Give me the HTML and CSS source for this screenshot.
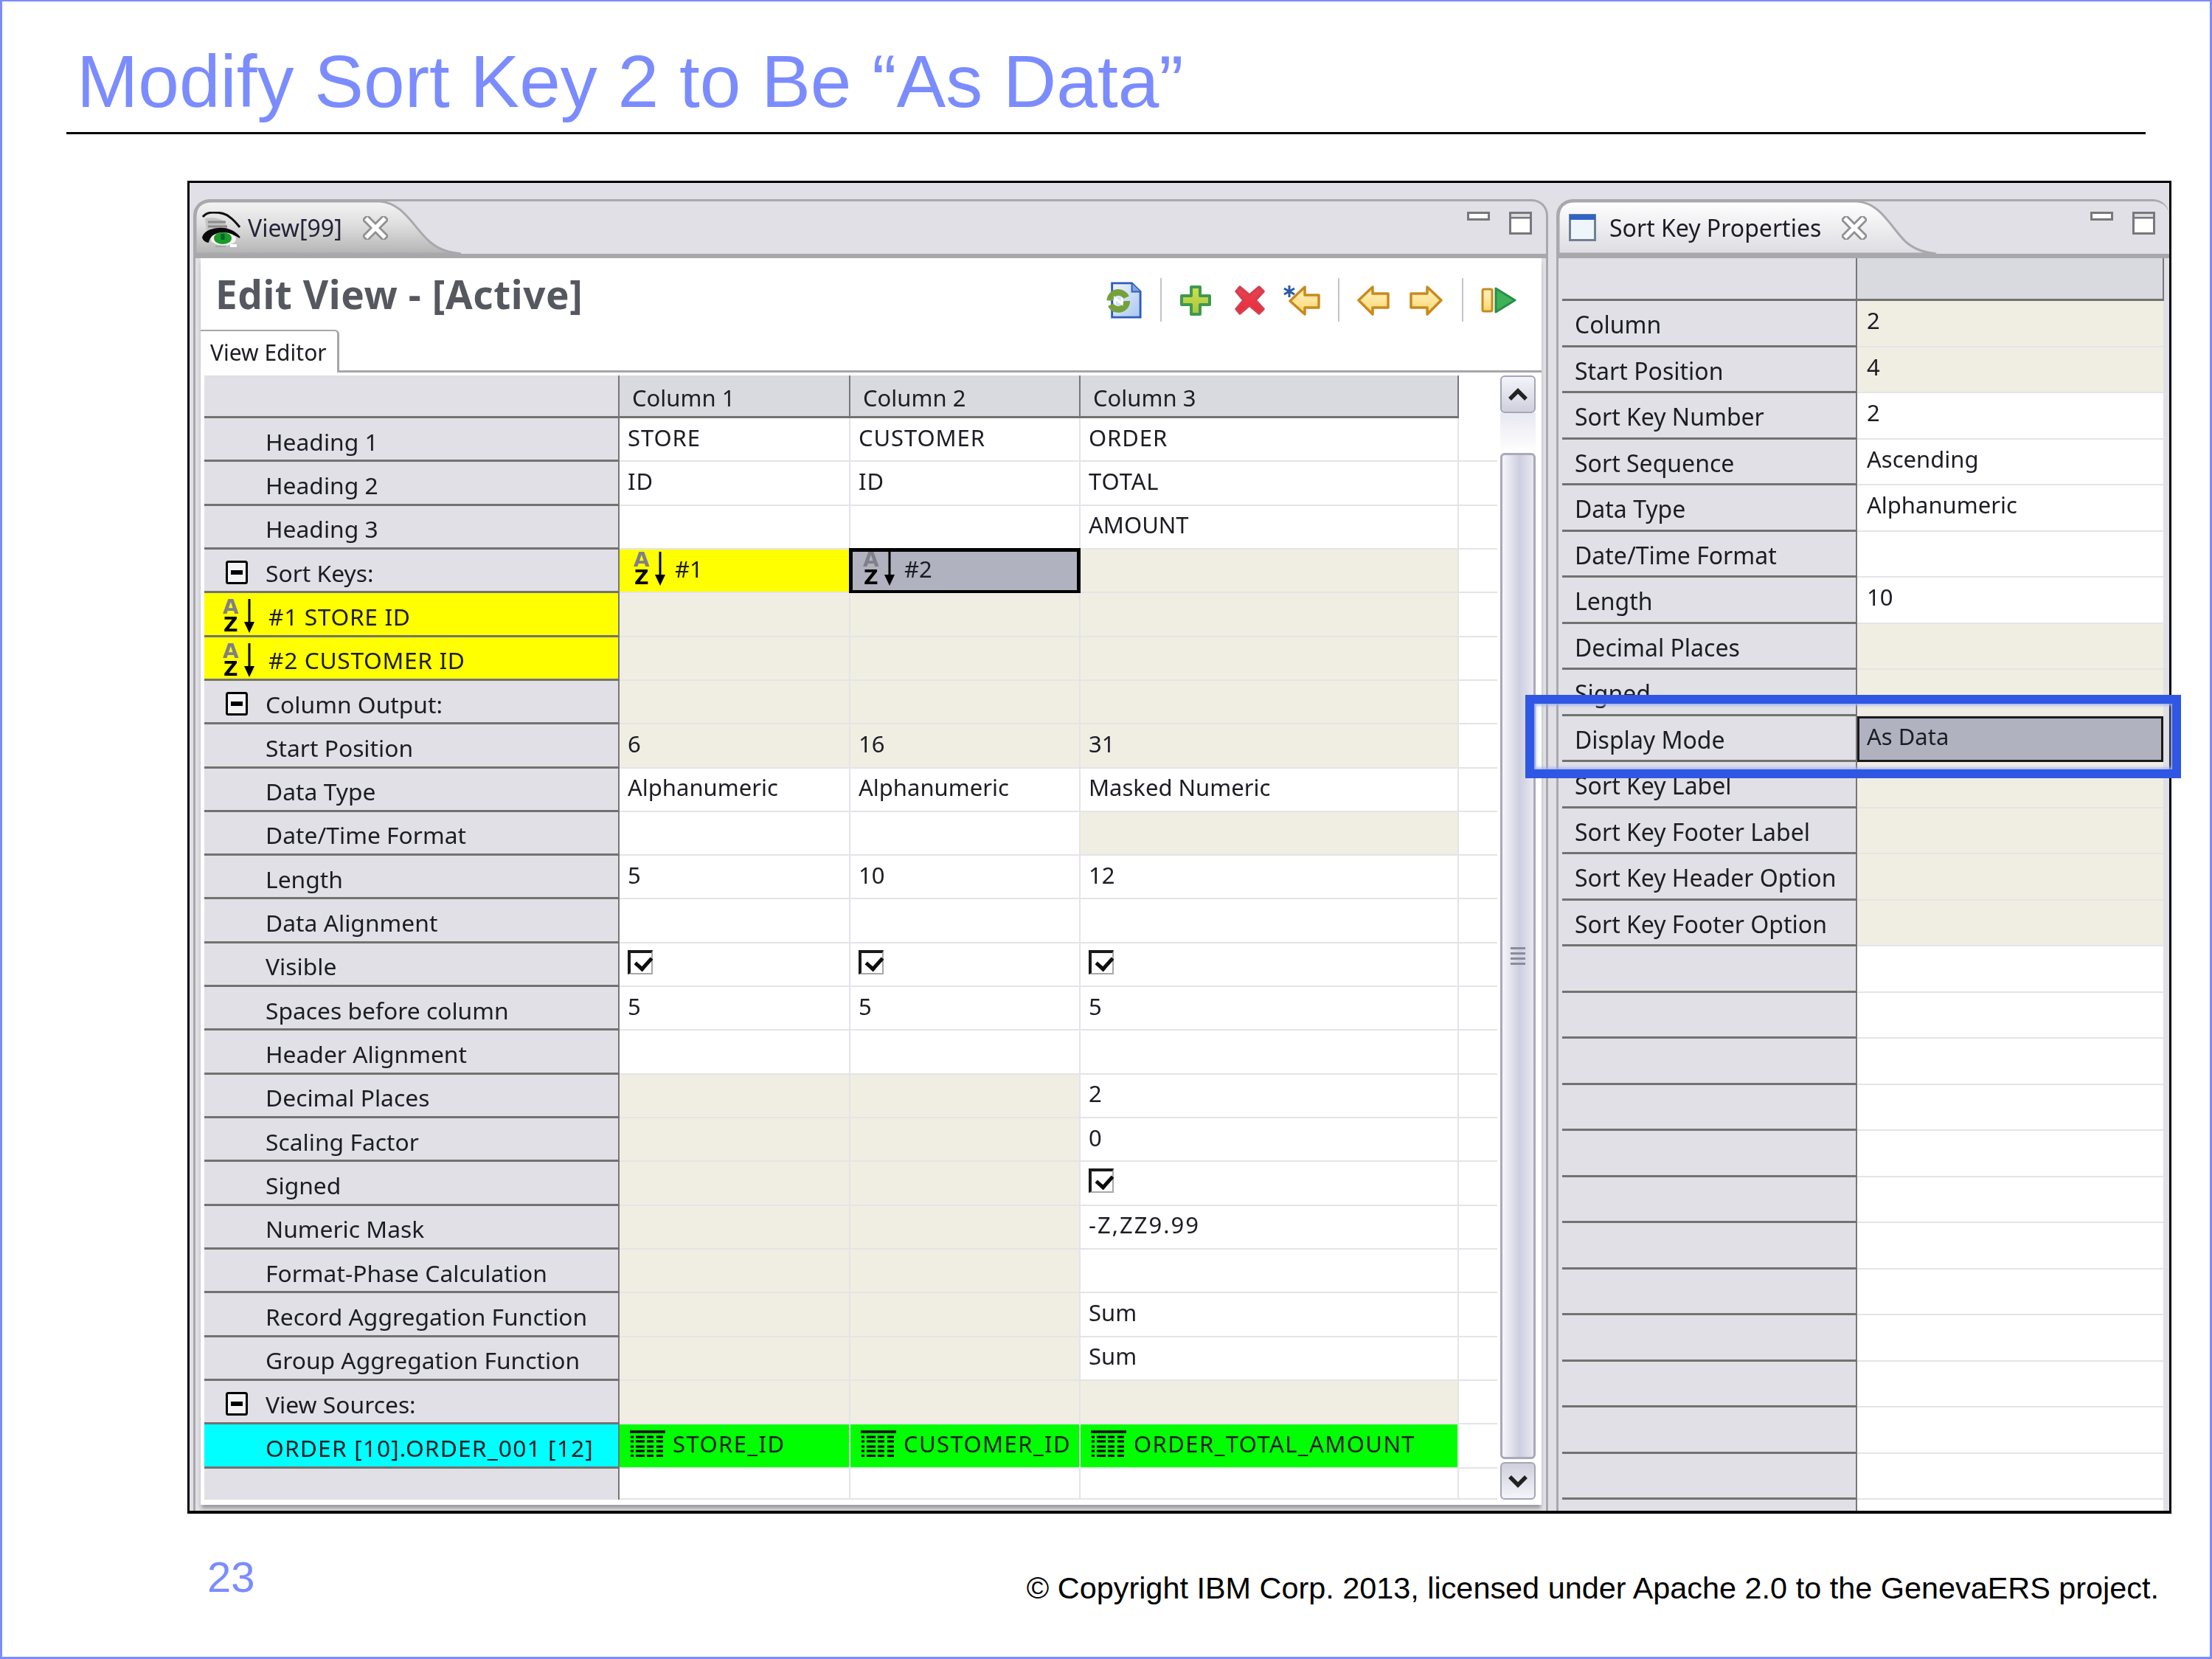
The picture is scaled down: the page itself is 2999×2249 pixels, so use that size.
FILE: index.html
```html
<!DOCTYPE html>
<html lang="en">
<head>
<meta charset="utf-8">
<title>Modify Sort Key 2 to Be "As Data"</title>
<link rel="stylesheet" href="styles.css">
</head>
<body>
<svg class="defs" aria-hidden="true">
  <defs>
    <linearGradient id="tabA" x1="0" y1="0" x2="0" y2="1"><stop offset="0" stop-color="#f4f4f4"/><stop offset="0.45" stop-color="#dedede"/><stop offset="1" stop-color="#b4b4b4"/></linearGradient>
    <linearGradient id="tabB" x1="0" y1="0" x2="0" y2="1"><stop offset="0" stop-color="#ffffff"/><stop offset="1" stop-color="#dcdce2"/></linearGradient>
    <linearGradient id="gold" x1="0" y1="0" x2="0" y2="1"><stop offset="0" stop-color="#fff3c4"/><stop offset="1" stop-color="#fbd66e"/></linearGradient>
    <linearGradient id="doc" x1="0" y1="0" x2="1" y2="1"><stop offset="0" stop-color="#f2f6fd"/><stop offset="1" stop-color="#a9c6ee"/></linearGradient>
    <linearGradient id="red" x1="0" y1="0" x2="0" y2="1"><stop offset="0" stop-color="#e84452"/><stop offset="1" stop-color="#f0283c"/></linearGradient>
    <linearGradient id="grn" x1="0" y1="0" x2="0" y2="1"><stop offset="0" stop-color="#cfe050"/><stop offset="1" stop-color="#a9c63a"/></linearGradient>
    <symbol id="sort" viewBox="0 0 46 46">
      <text class="sa" x="0" y="20">A</text>
      <text class="sz" x="1" y="44">Z</text>
      <path d="M36 0V34" stroke="#000" stroke-width="3" fill="none"/>
      <path d="M29 31H43L36 46Z" fill="#000"/>
    </symbol>
    <symbol id="minus" viewBox="0 0 30 32">
      <rect x="1.5" y="1.5" width="27" height="29" rx="2" fill="#f4f4f6" stroke="#000" stroke-width="3"/>
      <rect x="7" y="13" width="16" height="6" fill="#000"/>
    </symbol>
    <symbol id="tbl" viewBox="0 0 48 38">
      <path d="M0 3H48" stroke="#000" stroke-width="3.5" fill="none"/>
      <path d="M1 10h4M8 10h12M23 10h9M36 10h9M1 16h4M8 16h12M23 16h9M36 16h9M1 23h4M8 23h12M23 23h9M36 23h9M1 29h4M8 29h12M23 29h9M36 29h9M1 35.500h4M8 35.500h12M23 35.500h9M36 35.500h9" stroke="#000" stroke-width="3.200" fill="none"/>
    </symbol>
    <symbol id="close" viewBox="0 0 34 32">
      <path d="M6 5L28 27M28 5L6 27" stroke="#8f8f8f" stroke-width="11" stroke-linecap="square" fill="none"/>
      <path d="M6 5L28 27M28 5L6 27" stroke="#fdfdfd" stroke-width="5.5" stroke-linecap="square" fill="none"/>
    </symbol>
    <symbol id="min" viewBox="0 0 31 12">
      <rect x="1.5" y="1.5" width="28" height="9" fill="#fff" stroke="#77777c" stroke-width="3"/>
    </symbol>
    <symbol id="max" viewBox="0 0 31 31">
      <rect x="1.5" y="1.5" width="28" height="28" fill="#fff" stroke="#77777c" stroke-width="3"/>
      <path d="M2 8H29" stroke="#77777c" stroke-width="3"/>
      <rect x="3" y="3" width="25" height="4" fill="#dcdce2"/>
    </symbol>
  </defs>
</svg>

<main class="slide">
  <h1 class="title">Modify Sort Key 2 to Be “As Data”</h1>
  <div class="rule"></div>

  <section class="window">
    <div class="panel panel-left">
      <div class="tabbar">
        <svg class="tabshape" viewBox="0 0 360 71" aria-hidden="true"><path class="tabline" d="M0 71V22Q0 0 22 0H250C282 2 296 36 318 55C332 67 345 69 360 71Z" fill="url(#tabA)"/></svg>
        <svg class="eye" viewBox="0 0 52 50" aria-hidden="true">
          <path d="M1 7C5 2 10 1 15 1C24 1 32 2 37 7C43 11 47 16 51 21" stroke="#111" stroke-width="3" fill="none"/>
          <path d="M4 9C14 7 24 9 30 13L36 26H6Z" fill="#c4c4c4"/>
          <path d="M8 14H32M8 20H34" stroke="#8c8c8c" stroke-width="3"/>
          <path d="M1 35C3 28 11 24 22 23C33 22 44 26 51 35C45 31 38 28 27 28C16 28 10 33 8 41C5 41 2 38 1 35Z" fill="#0a0a0a" stroke="#0a0a0a" stroke-width="2"/>
          <ellipse cx="29" cy="37" rx="17" ry="9" fill="#f4f6f2"/>
          <ellipse cx="28" cy="36" rx="12" ry="8" fill="#1c9a28"/>
          <path d="M28 30V38" stroke="#063" stroke-width="5"/>
          <path d="M18 47H32" stroke="#a8a8a8" stroke-width="2.500"/>
          <rect x="38" y="44" width="9" height="4" fill="#fff"/>
        </svg>
        <span class="tabtext tabtext-left">View[99]</span>
        <svg class="closeicon"><use href="#close"/></svg>
        <span class="winbtns">
          <svg class="minicon"><use href="#min"/></svg>
          <svg class="maxicon"><use href="#max"/></svg>
        </span>
      </div>

      <div class="body">
        <div class="head">
          <h2 class="edit-title">Edit View - [Active]</h2>
          <div class="toolbar">
            <svg class="ti ti-refresh" viewBox="0 0 50 52" aria-hidden="true">
              <path d="M8 2H36L48 14V50H8Z" fill="url(#doc)" stroke="#2f5cbe" stroke-width="3"/>
              <path d="M36 2V14H48" fill="#7ea4e4" stroke="#2f5cbe" stroke-width="2"/>
              <circle cx="17" cy="27" r="12" fill="none" stroke="#76a03c" stroke-width="9" stroke-dasharray="32 6"/>
              <path d="M12 32V23L22 31V22" fill="none" stroke="#fff" stroke-width="3"/>
            </svg>
            <span class="sep"></span>
            <svg class="ti ti-plus" viewBox="0 0 44 50" aria-hidden="true"><path d="M16 7H28V19H41V31H28V44H16V31H3V19H16Z" fill="url(#grn)" stroke="#3d9a50" stroke-width="4" stroke-linejoin="round"/></svg>
            <svg class="ti ti-del" viewBox="0 0 48 50" aria-hidden="true"><path d="M14 7L27 18L40 7L46 13L35 25L46 37L40 43L27 32L14 43L9 37L19 25L9 13Z" fill="url(#red)" stroke="#d2404f" stroke-width="3.500" stroke-linejoin="round"/></svg>
            <svg class="ti ti-new" viewBox="0 0 51 50" aria-hidden="true">
              <path d="M30 7L10 26L30 44V35H49V18H30Z" fill="url(#gold)" stroke="#c98a1c" stroke-width="3.5" stroke-linejoin="round"/>
              <path d="M9 5V21M2 9L16 17M16 9L2 17" stroke="#2b5aa8" stroke-width="3"/>
            </svg>
            <span class="sep"></span>
            <svg class="ti ti-left" viewBox="0 0 44 50" aria-hidden="true"><path d="M21 7L2 25L21 44V35H42V16H21Z" fill="url(#gold)" stroke="#c98a1c" stroke-width="3.5" stroke-linejoin="round"/></svg>
            <svg class="ti ti-right" viewBox="0 0 50 50" aria-hidden="true"><path d="M27 7L46 25L27 44V35H5V16H27Z" fill="url(#gold)" stroke="#c98a1c" stroke-width="3.5" stroke-linejoin="round"/></svg>
            <span class="sep"></span>
            <svg class="ti ti-run" viewBox="0 0 48 50" aria-hidden="true">
              <rect x="2" y="10" width="13" height="30" rx="2" fill="url(#gold)" stroke="#c98a1c" stroke-width="3"/>
              <path d="M20 9L46 25L20 41Z" fill="#3fb257" stroke="#2a8e48" stroke-width="3" stroke-linejoin="round"/>
            </svg>
          </div>
        </div>

        <div class="subtabs"><span class="subtab">View Editor</span></div>

        <div class="editor">
          <div class="grid">
            <div class="l"></div><div class="h">Column 1</div><div class="h">Column 2</div><div class="h">Column 3</div><div class="f0"></div>

            <div class="l">Heading 1</div><div class="c up">STORE</div><div class="c up">CUSTOMER</div><div class="c up">ORDER</div><div class="f"></div>
            <div class="l">Heading 2</div><div class="c up">ID</div><div class="c up">ID</div><div class="c up">TOTAL</div><div class="f"></div>
            <div class="l">Heading 3</div><div class="c"></div><div class="c"></div><div class="c">AMOUNT</div><div class="f"></div>

            <div class="l g"><svg class="minus"><use href="#minus"/></svg>Sort Keys:</div>
            <div class="c y"><svg class="sorti"><use href="#sort"/></svg>#1</div>
            <div class="c sel"><svg class="sorti"><use href="#sort"/></svg>#2</div>
            <div class="c d"></div><div class="f"></div>

            <div class="l y2"><svg class="sorti"><use href="#sort"/></svg>#1 STORE ID</div><div class="c d"></div><div class="c d"></div><div class="c d"></div><div class="f"></div>
            <div class="l y2"><svg class="sorti"><use href="#sort"/></svg>#2 CUSTOMER ID</div><div class="c d"></div><div class="c d"></div><div class="c d"></div><div class="f"></div>

            <div class="l g"><svg class="minus"><use href="#minus"/></svg>Column Output:</div><div class="c d"></div><div class="c d"></div><div class="c d"></div><div class="f"></div>

            <div class="l">Start Position</div><div class="c d">6</div><div class="c d">16</div><div class="c d">31</div><div class="f"></div>
            <div class="l">Data Type</div><div class="c">Alphanumeric</div><div class="c">Alphanumeric</div><div class="c">Masked Numeric</div><div class="f"></div>
            <div class="l">Date/Time Format</div><div class="c"></div><div class="c"></div><div class="c d"></div><div class="f"></div>
            <div class="l">Length</div><div class="c">5</div><div class="c">10</div><div class="c">12</div><div class="f"></div>
            <div class="l">Data Alignment</div><div class="c"></div><div class="c"></div><div class="c"></div><div class="f"></div>
            <div class="l">Visible</div><div class="c"><span class="chk"></span></div><div class="c"><span class="chk"></span></div><div class="c"><span class="chk"></span></div><div class="f"></div>
            <div class="l">Spaces before column</div><div class="c">5</div><div class="c">5</div><div class="c">5</div><div class="f"></div>
            <div class="l">Header Alignment</div><div class="c"></div><div class="c"></div><div class="c"></div><div class="f"></div>
            <div class="l">Decimal Places</div><div class="c d"></div><div class="c d"></div><div class="c">2</div><div class="f"></div>
            <div class="l">Scaling Factor</div><div class="c d"></div><div class="c d"></div><div class="c">0</div><div class="f"></div>
            <div class="l">Signed</div><div class="c d"></div><div class="c d"></div><div class="c"><span class="chk"></span></div><div class="f"></div>
            <div class="l">Numeric Mask</div><div class="c d"></div><div class="c d"></div><div class="c mask">-Z,ZZ9.99</div><div class="f"></div>
            <div class="l">Format-Phase Calculation</div><div class="c d"></div><div class="c d"></div><div class="c"></div><div class="f"></div>
            <div class="l">Record Aggregation Function</div><div class="c d"></div><div class="c d"></div><div class="c">Sum</div><div class="f"></div>
            <div class="l">Group Aggregation Function</div><div class="c d"></div><div class="c d"></div><div class="c">Sum</div><div class="f"></div>

            <div class="l g"><svg class="minus"><use href="#minus"/></svg>View Sources:</div><div class="c d"></div><div class="c d"></div><div class="c d"></div><div class="f"></div>

            <div class="l cy">ORDER [10].ORDER_001 [12]</div>
            <div class="c gr"><svg class="tbli"><use href="#tbl"/></svg>STORE_ID</div>
            <div class="c gr"><svg class="tbli"><use href="#tbl"/></svg>CUSTOMER_ID</div>
            <div class="c gr"><svg class="tbli"><use href="#tbl"/></svg>ORDER_TOTAL_AMOUNT</div>
            <div class="f"></div>

            <div class="l last"></div><div class="c last"></div><div class="c last"></div><div class="c last"></div><div class="f last"></div>
          </div>

          <div class="scroll">
            <div class="sbtn sbtn-up"><svg viewBox="0 0 28 18" class="chev" aria-hidden="true"><path d="M3 15L14 4L25 15" stroke="#222" stroke-width="5.5" fill="none"/></svg></div>
            <div class="strack"></div>
            <div class="sthumb"><span class="grip"></span></div>
            <div class="sbtn sbtn-down"><svg viewBox="0 0 28 18" class="chev" aria-hidden="true"><path d="M3 3L14 14L25 3" stroke="#222" stroke-width="5.5" fill="none"/></svg></div>
          </div>
        </div>
      </div>
    </div>

    <div class="panel panel-right">
      <div class="tabbar">
        <svg class="tabshape tabshape-right" viewBox="0 0 512 71" aria-hidden="true"><path class="tabline" d="M0 71V22Q0 0 22 0H405C437 2 451 36 471 55C485 67 498 69 512 71Z" fill="url(#tabB)"/></svg>
        <svg class="propicon" viewBox="0 0 37 37" aria-hidden="true">
          <rect x="1.5" y="1.5" width="34" height="34" fill="#eef6fb" stroke="#6f7f96" stroke-width="3"/>
          <rect x="1" y="1" width="35" height="7" fill="#2f63c8"/>
        </svg>
        <span class="tabtext tabtext-right">Sort Key Properties</span>
        <svg class="closeicon"><use href="#close"/></svg>
        <span class="winbtns">
          <svg class="minicon"><use href="#min"/></svg>
          <svg class="maxicon"><use href="#max"/></svg>
        </span>
      </div>
      <div class="props">
        <div class="pl"></div><div class="ph"></div>
        <div class="pl">Column</div><div class="pv d">2</div>
        <div class="pl">Start Position</div><div class="pv d">4</div>
        <div class="pl">Sort Key Number</div><div class="pv">2</div>
        <div class="pl">Sort Sequence</div><div class="pv">Ascending</div>
        <div class="pl">Data Type</div><div class="pv">Alphanumeric</div>
        <div class="pl">Date/Time Format</div><div class="pv"></div>
        <div class="pl">Length</div><div class="pv">10</div>
        <div class="pl">Decimal Places</div><div class="pv d"></div>
        <div class="pl">Signed</div><div class="pv d"></div>
        <div class="pl">Display Mode</div><div class="pv psel">As Data</div>
        <div class="pl">Sort Key Label</div><div class="pv d"></div>
        <div class="pl">Sort Key Footer Label</div><div class="pv d"></div>
        <div class="pl">Sort Key Header Option</div><div class="pv d"></div>
        <div class="pl">Sort Key Footer Option</div><div class="pv d"></div>
        <div class="pl"></div><div class="pv"></div>
        <div class="pl"></div><div class="pv"></div>
        <div class="pl"></div><div class="pv"></div>
        <div class="pl"></div><div class="pv"></div>
        <div class="pl"></div><div class="pv"></div>
        <div class="pl"></div><div class="pv"></div>
        <div class="pl"></div><div class="pv"></div>
        <div class="pl"></div><div class="pv"></div>
        <div class="pl"></div><div class="pv"></div>
        <div class="pl"></div><div class="pv"></div>
        <div class="pl"></div><div class="pv"></div>
        <div class="pl"></div><div class="pv"></div>
        <div class="pl"></div><div class="pv"></div>
      </div>
    </div>
  </section>

  <div class="callout"></div>

  <footer class="footer">
    <span class="pageno">23</span>
    <span class="copy">© Copyright IBM Corp. 2013, licensed under Apache 2.0 to the GenevaERS project.</span>
  </footer>
</main>
</body>
</html>
```

FILE: styles.css
```css
* { box-sizing: border-box; }
html, body { margin: 0; padding: 0; background: #fff; }
.defs { position: absolute; width: 0; height: 0; }

.slide {
  position: relative;
  width: 2999px;
  height: 2249px;
  overflow: hidden;
  background: #fff;
  border: solid #7b8cff;
  border-width: 2px 3px 3px 3px;
  font-family: "Liberation Sans", Arial, sans-serif;
}
.title {
  margin: 58px 0 0 101px;
  font-size: 100px;
  line-height: 100px;
  font-weight: 400;
  color: #7b8cff;
  white-space: nowrap;
}
.rule { height: 3px; margin: 19px 87px 0 87px; background: #000; }

.window {
  display: flex;
  gap: 11px;
  width: 2690px;
  height: 1807px;
  margin: 63px 0 0 251px;
  padding: 22px 0 0 5px;
  overflow: hidden;
  background: #e0e0e6;
  border: solid #000;
  border-width: 3px 3px 4px 3px;
  font-family: "Noto Sans", "DejaVu Sans", sans-serif;
  font-size: 31px;
  color: #1c1c24;
  filter: blur(0.6px);
}

.panel {
  flex: none;
  display: flex;
  flex-direction: column;
  border: 3px solid #a9a9ad;
  border-bottom: none;
  border-radius: 22px 22px 0 0;
}
.panel-left { width: 1837px; height: 1780px; }
.panel-right { width: 831px; height: 1800px; border-right: none; }

.tabbar {
  position: relative;
  flex: none;
  display: flex;
  align-items: center;
  height: 77px;
  border-bottom: 6px solid #a8a8ac;
  font-size: 32px;
}
.tabshape { position: absolute; left: 0; top: 0; width: 360px; height: 71px; overflow: visible; }
.tabshape-right { width: 512px; }
.tabline { stroke: #a9a9ad; stroke-width: 3; }
.tabtext { position: relative; white-space: nowrap; }
.tabtext-left { margin-left: 10px; color: #23233a; }
.tabtext-right { margin-left: 18px; }
.eye { position: relative; flex: none; width: 52px; height: 50px; margin: 6px 0 0 9px; }
.propicon { position: relative; flex: none; width: 37px; height: 37px; margin: 0 0 0 14px; }
.closeicon { position: relative; flex: none; width: 34px; height: 32px; margin-left: 28px; }
.winbtns { display: flex; align-items: flex-start; gap: 26px; margin-left: auto; margin-top: -12px; padding-right: 19px; }
.minicon { width: 31px; height: 12px; }
.maxicon { width: 31px; height: 31px; }

.body {
  flex: none;
  margin: 0 6px 0 7px;
  padding-bottom: 7px;
  background: #fff;
  box-shadow: 0 6px 5px -1px #9c9ca0;
}
.head { display: flex; align-items: center; height: 97px; padding: 0 34px 0 20px; }
.edit-title {
  margin: 0;
  font-family: "Noto Sans", sans-serif;
  font-size: 53px;
  line-height: 1;
  letter-spacing: 0.6px;
  font-weight: 700;
  color: #55585f;
  white-space: nowrap;
}
.toolbar { display: flex; align-items: center; gap: 24px; margin: 16px 0 0 auto; }
.ti { flex: none; height: 50px; }
.ti-refresh { width: 50px; }
.ti-plus { width: 44px; }
.ti-del { width: 48px; }
.ti-new { width: 51px; }
.ti-left { width: 44px; }
.ti-right { width: 50px; }
.ti-run { width: 48px; }
.sep { flex: none; width: 2px; height: 59px; background: #c2c4cc; }

.subtabs { height: 58px; border-bottom: 3px solid #a6a6aa; }
.subtab {
  display: inline-flex;
  align-items: center;
  height: 58px;
  padding: 0 14px 0 13px;
  background: #fff;
  border: solid #a6a6aa;
  border-width: 2px 3px 0 0;
  border-top-right-radius: 6px;
  font-size: 30px;
}

.editor { display: flex; gap: 4px; margin: 4px 0 0 5px; }
.grid {
  flex: none;
  display: grid;
  grid-template-columns: 563px 313px 312px 513px 52px;
  grid-template-rows: 58px repeat(24, 59.32px) 42px;
  white-space: nowrap;
}
.l {
  display: flex;
  align-items: center;
  padding: 6px 0 0 83px;
  background: #e0e0e6;
  border-right: 2px solid #77777a;
  border-bottom: 3px solid #727270;
  font-size: 31.8px;
}
.g { padding-left: 29px; }
.minus { flex: none; width: 30px; height: 32px; margin-right: 24px; }
.y2 { padding-left: 25px; background: #ff0; letter-spacing: 0.6px; }
.y2 .sorti { margin-right: 16px; }
.cy { background: #0ff; letter-spacing: 1.1px; }
.last { border-bottom: none; }
.h {
  display: flex;
  align-items: center;
  padding: 4px 0 0 17px;
  background: #d9dae0;
  border-right: 2px solid #77777a;
  border-bottom: 3px solid #727270;
}
.f0 { background: #fff; }
.c {
  display: flex;
  align-items: center;
  padding: 0 0 6px 11px;
  background: #fff;
  border-right: 2px solid #e4e4e8;
  border-bottom: 2px solid #e4e4e8;
}
.up { letter-spacing: 0.9px; }
.mask { letter-spacing: 2px; }
.f { background: #fff; border-bottom: 2px solid #e4e4e8; }
.d { background: #f0eee2; }
.y { background: #ff0; padding-left: 19px; }
.sorti { flex: none; width: 46px; height: 46px; margin-right: 10px; }
.sa { font: 700 28px "DejaVu Sans", sans-serif; fill: #808088; }
.sz { font: 700 27px "DejaVu Sans", sans-serif; fill: #000; }
.sel {
  margin: -2px 0 -1px -2px;
  padding-left: 14px;
  background: #b0b2bf;
  border: 5px solid #000;
}
.gr { padding: 0 0 6px 14px; background: #0f0; letter-spacing: 1.4px; }
.tbli { flex: none; width: 48px; height: 38px; margin-right: 10px; }
.chk {
  position: relative;
  width: 34px;
  height: 33px;
  background: #fff;
  border: solid;
  border-color: #1a1a1a #a8a8ac #a8a8ac #1a1a1a;
  border-width: 4px 2px 2px 4px;
}
.chk::after {
  content: "";
  position: absolute;
  left: 10px;
  top: 1px;
  width: 10px;
  height: 17px;
  border: solid #0c0c0c;
  border-width: 0 5px 5px 0;
  transform: rotate(42deg);
}

.scroll { flex: none; display: flex; flex-direction: column; width: 48px; height: 1524px; }
.sbtn {
  flex: none;
  display: flex;
  align-items: center;
  justify-content: center;
  height: 51px;
  background: linear-gradient(#f4f4fa, #cfd0dc);
  border: 2px solid #a4a6b4;
  border-radius: 6px;
}
.sbtn-down { margin-top: 4px; background: linear-gradient(#cfd0dc, #f4f4fa); }
.chev { width: 28px; height: 18px; }
.strack { flex: none; height: 54px; background: linear-gradient(#e8e8f2, #fff); }
.sthumb {
  flex: 1;
  display: flex;
  align-items: center;
  justify-content: center;
  background: linear-gradient(90deg, #f6f6fa, #cdcfe0 55%, #e8e8f0);
  border: 3px solid #a8aab8;
  border-radius: 6px;
}
.grip { width: 20px; height: 25px; background: repeating-linear-gradient(#8a8c9a 0 3px, transparent 3px 7px); }

.props {
  display: grid;
  grid-template-columns: 400px 416px;
  grid-template-rows: 58px;
  grid-auto-rows: 62.5px;
  margin-left: 5px;
  white-space: nowrap;
}
.pl {
  display: flex;
  align-items: center;
  padding: 4px 0 0 17px;
  background: #e0e0e6;
  border-right: 2px solid #77777a;
  border-bottom: 3px solid #727270;
  font-size: 32px;
}
.ph { background: #d9dae0; border-right: 2px solid #77777a; border-bottom: 3px solid #727270; }
.pv {
  display: flex;
  align-items: center;
  padding: 0 0 8px 13px;
  margin-right: 1px;
  background: #fff;
  border-bottom: 2px solid #e4e4e8;
}
.pv.d { background: #f0eee2; }
.pv.psel { background: #b0b2bf; border: 3px solid #1a1a1a; padding-left: 10px; }

.callout {
  position: absolute;
  left: 2065px;
  top: 940px;
  width: 889px;
  height: 113px;
  border: 12px solid #2f57e3;
  box-shadow: inset 0 0 4px 2px #9db0f2;
}

.footer { display: flex; justify-content: space-between; padding: 0 69px 0 278px; }
.pageno { margin-top: 57px; font-size: 58px; line-height: 58px; color: #7b8cff; }
.copy { margin-top: 81px; font-size: 41.4px; line-height: 41.4px; color: #000; white-space: nowrap; }
```
